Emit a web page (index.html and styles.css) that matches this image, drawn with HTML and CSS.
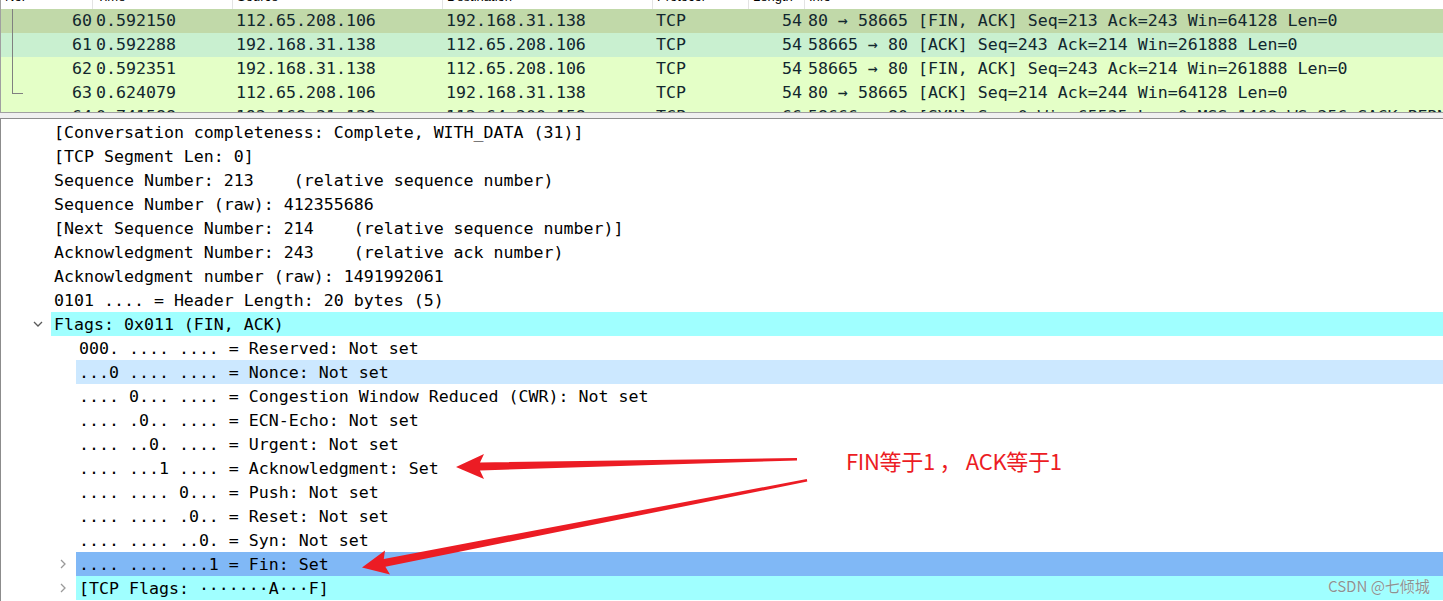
FILE: index.html
```html
<!DOCTYPE html>
<html lang="zh">
<head>
<meta charset="utf-8">
<title>Wireshark TCP FIN</title>
<link rel="stylesheet" href="styles.css">
</head>
<body>
<div class="packets">
  <div class="phead">
    <div class="hc c-no"><span>No.</span></div>
    <div class="hc c-time"><span>Time</span></div>
    <div class="hc c-src"><span>Source</span></div>
    <div class="hc c-dst"><span>Destination</span></div>
    <div class="hc c-proto"><span>Protocol</span></div>
    <div class="hc c-len"><span>Length</span></div>
    <div class="hc c-info"><span>Info</span></div>
  </div>
  <div class="prow r-sel">
    <div class="c-no tl">60</div><div class="c-time">0.592150</div><div class="c-src">112.65.208.106</div><div class="c-dst">192.168.31.138</div><div class="c-proto">TCP</div><div class="c-len">54</div><div class="c-info">80 → 58665 [FIN, ACK] Seq=213 Ack=243 Win=64128 Len=0</div>
  </div>
  <div class="prow r-hov">
    <div class="c-no tl">61</div><div class="c-time">0.592288</div><div class="c-src">192.168.31.138</div><div class="c-dst">112.65.208.106</div><div class="c-proto">TCP</div><div class="c-len">54</div><div class="c-info">58665 → 80 [ACK] Seq=243 Ack=214 Win=261888 Len=0</div>
  </div>
  <div class="prow r-http">
    <div class="c-no tl">62</div><div class="c-time">0.592351</div><div class="c-src">192.168.31.138</div><div class="c-dst">112.65.208.106</div><div class="c-proto">TCP</div><div class="c-len">54</div><div class="c-info">58665 → 80 [FIN, ACK] Seq=243 Ack=214 Win=261888 Len=0</div>
  </div>
  <div class="prow r-http">
    <div class="c-no tl-end">63</div><div class="c-time">0.624079</div><div class="c-src">112.65.208.106</div><div class="c-dst">192.168.31.138</div><div class="c-proto">TCP</div><div class="c-len">54</div><div class="c-info">80 → 58665 [ACK] Seq=214 Ack=244 Win=64128 Len=0</div>
  </div>
  <div class="prow r-http">
    <div class="c-no">64</div><div class="c-time">0.741588</div><div class="c-src">192.168.31.138</div><div class="c-dst">112.64.200.158</div><div class="c-proto">TCP</div><div class="c-len">66</div><div class="c-info">58666 → 80 [SYN] Seq=0 Win=65535 Len=0 MSS=1460 WS=256 SACK_PERM</div>
  </div>
</div>
<div class="split"></div>
<div class="details">
  <div class="drow l1"><span class="tog"></span><span class="lbl">[Conversation completeness: Complete, WITH_DATA (31)]</span></div>
  <div class="drow l1"><span class="tog"></span><span class="lbl">[TCP Segment Len: 0]</span></div>
  <div class="drow l1"><span class="tog"></span><span class="lbl">Sequence Number: 213    (relative sequence number)</span></div>
  <div class="drow l1"><span class="tog"></span><span class="lbl">Sequence Number (raw): 412355686</span></div>
  <div class="drow l1"><span class="tog"></span><span class="lbl">[Next Sequence Number: 214    (relative sequence number)]</span></div>
  <div class="drow l1"><span class="tog"></span><span class="lbl">Acknowledgment Number: 243    (relative ack number)</span></div>
  <div class="drow l1"><span class="tog"></span><span class="lbl">Acknowledgment number (raw): 1491992061</span></div>
  <div class="drow l1"><span class="tog"></span><span class="lbl">0101 .... = Header Length: 20 bytes (5)</span></div>
  <div class="drow l1 hl-cyan"><span class="tog"><svg class="chev-down" width="10" height="6" viewBox="0 0 10 6"><polyline points="1,1 5,5 9,1"/></svg></span><span class="lbl">Flags: 0x011 (FIN, ACK)</span></div>
  <div class="drow l2"><span class="tog"></span><span class="lbl">000. .... .... = Reserved: Not set</span></div>
  <div class="drow l2 hl-hover"><span class="tog"></span><span class="lbl">...0 .... .... = Nonce: Not set</span></div>
  <div class="drow l2"><span class="tog"></span><span class="lbl">.... 0... .... = Congestion Window Reduced (CWR): Not set</span></div>
  <div class="drow l2"><span class="tog"></span><span class="lbl">.... .0.. .... = ECN-Echo: Not set</span></div>
  <div class="drow l2"><span class="tog"></span><span class="lbl">.... ..0. .... = Urgent: Not set</span></div>
  <div class="drow l2"><span class="tog"></span><span class="lbl">.... ...1 .... = Acknowledgment: Set</span></div>
  <div class="drow l2"><span class="tog"></span><span class="lbl">.... .... 0... = Push: Not set</span></div>
  <div class="drow l2"><span class="tog"></span><span class="lbl">.... .... .0.. = Reset: Not set</span></div>
  <div class="drow l2"><span class="tog"></span><span class="lbl">.... .... ..0. = Syn: Not set</span></div>
  <div class="drow l2 hl-sel"><span class="tog"><svg class="chev-right" width="6" height="10" viewBox="0 0 6 10"><polyline points="1,1 5,5 1,9"/></svg></span><span class="lbl">.... .... ...1 = Fin: Set</span></div>
  <div class="drow l2 hl-cyan"><span class="tog"><svg class="chev-right" width="6" height="10" viewBox="0 0 6 10"><polyline points="1,1 5,5 1,9"/></svg></span><span class="lbl">[TCP Flags: ·······A···F]</span></div>
</div>
<svg class="arrows" width="1443" height="601" viewBox="0 0 1443 601">
  <polygon points="456,467 484,454 480,462.5 797,458 797,460.5 480,470.5 484,479"/>
  <polygon points="362,567.5 385,550.5 383.8,558.9 806.8,479 807.3,481.5 385.4,566.7 390,574.5"/>
</svg>
<div class="note">FIN等于1 ， ACK等于1</div>
<div class="wm">CSDN @七倾城</div>
</body>
</html>
```
FILE: styles.css
```css
html, body {
  margin: 0;
  padding: 0;
}
body {
  width: 1443px;
  height: 601px;
  overflow: hidden;
  position: relative;
  background: #ffffff;
  font-family: "DejaVu Sans Mono", "Liberation Mono", monospace;
  font-size: 16.6px;
}

/* packet list */
.packets {
  height: 112px;
  border-left: 1px solid #a0a0a0;
  border-bottom: 1px solid #a0a0a0;
  overflow: hidden;
}
.phead {
  display: flex;
  height: 9px;
  overflow: hidden;
  background: #ffffff;
  font-family: "Liberation Sans", Arial, sans-serif;
  font-size: 13px;
  color: #000;
}
.hc {
  box-sizing: border-box;
  border-right: 1px solid #e3e3e3;
  padding-left: 4px;
  flex: none;
}
.hc span {
  display: block;
  margin-top: -12px;
  line-height: 18px;
}
.c-no { width: 92px; }
.c-time { width: 140px; }
.c-src { width: 210px; }
.c-dst { width: 210px; }
.c-proto { width: 96px; }
.c-len { width: 56px; }
.c-info { flex: 1 1 auto; }
.phead .c-info { border-right: none; }

.prow {
  display: flex;
  height: 24px;
  line-height: 24px;
  white-space: pre;
  color: #12272e;
}
.prow > div {
  box-sizing: border-box;
  flex: none;
  padding-left: 3px;
}
.prow > .c-info { flex: 1 1 auto; }
.prow > .c-no {
  text-align: right;
  padding-right: 1px;
  position: relative;
}
.prow > .c-len {
  text-align: right;
  padding-right: 3px;
}
.r-sel { background: #c1d9a9; }
.r-hov { background: #c9f0d0; }
.r-http { background: #e4ffc7; }

.tl::before {
  content: "";
  position: absolute;
  left: 11px;
  top: 0;
  bottom: 0;
  border-left: 1px solid #808080;
}
.tl-end::before {
  content: "";
  position: absolute;
  left: 11px;
  top: 0;
  height: 12px;
  border-left: 1px solid #808080;
}
.tl-end::after {
  content: "";
  position: absolute;
  left: 11px;
  top: 12px;
  width: 11px;
  border-top: 1px solid #808080;
}

.split {
  height: 5px;
  background: #f0f0f0;
}

/* details tree */
.details {
  border-top: 1px solid #8c8c8c;
  border-left: 1px solid #8c8c8c;
  padding-top: 1px;
  height: 481px;
  overflow: hidden;
}
.drow {
  display: flex;
  height: 24px;
  line-height: 25px;
  white-space: pre;
  color: #000;
}
.l1 { padding-left: 25px; }
.l2 { padding-left: 50px; }
.tog {
  width: 25px;
  flex: none;
  display: flex;
  align-items: center;
  justify-content: center;
}
.lbl {
  flex: 1 1 auto;
  padding-left: 3px;
}
.hl-cyan .lbl { background: #a0ffff; }
.hl-hover .lbl { background: #cce8ff; }
.hl-sel .lbl { background: #80b8f6; }

.chev-down { margin-left: -2px; }
.chev-down polyline {
  fill: none;
  stroke: #5a5a5a;
  stroke-width: 1.3;
}
.chev-right polyline {
  fill: none;
  stroke: #9a9a9a;
  stroke-width: 1.3;
}
.chev-right { margin-left: -2px; }

/* annotations */
.arrows {
  position: absolute;
  left: 0;
  top: 0;
  pointer-events: none;
}
.arrows polygon {
  fill: #ec1c24;
}
.note {
  position: absolute;
  left: 846px;
  top: 445px;
  font-family: "Noto Sans CJK SC", "Noto Sans", sans-serif;
  font-size: 22px;
  line-height: 30px;
  color: #ec1c24;
  white-space: pre;
  letter-spacing: -0.3px;
}
.wm {
  position: absolute;
  left: 1328px;
  top: 576px;
  font-family: "Noto Sans CJK SC", "Noto Sans", sans-serif;
  font-size: 15px;
  line-height: 20px;
  color: rgba(110, 110, 110, 0.75);
  text-shadow: 0 0 1px rgba(255, 255, 255, 0.8);
  white-space: pre;
}
```
